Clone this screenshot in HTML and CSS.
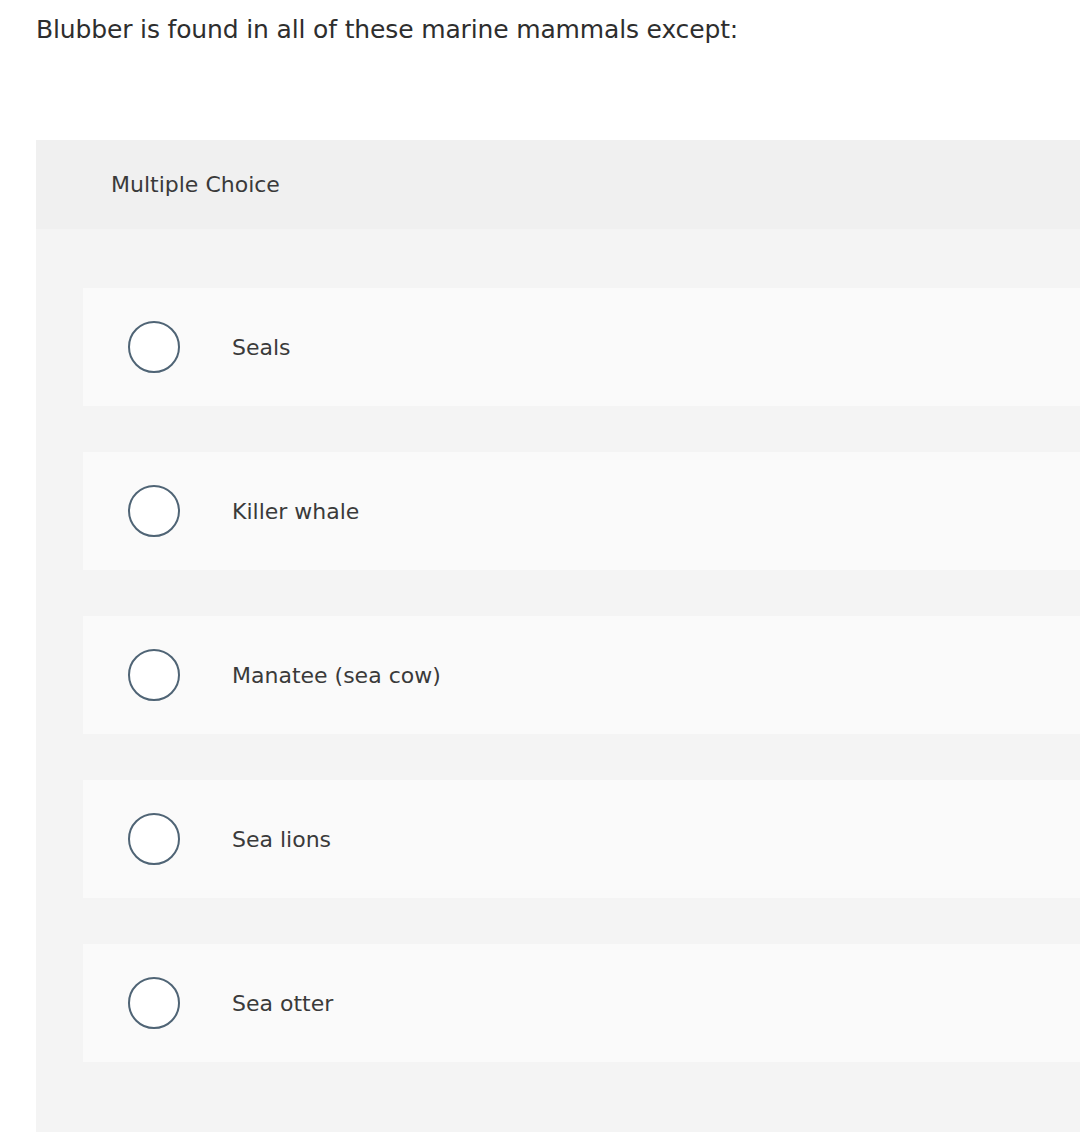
FILE: index.html
```html
<!DOCTYPE html>
<html>
<head>
<meta charset="utf-8">
<link rel="stylesheet" href="styles.css">
</head>
<body>
<div class="question">Blubber is found in all of these marine mammals except:</div>
<div class="panel">
  <div class="panel-head">Multiple Choice</div>
  <div class="options">
    <div class="option"><span class="radio"></span><span class="label">Seals</span></div>
    <div class="option"><span class="radio"></span><span class="label">Killer whale</span></div>
    <div class="option"><span class="radio"></span><span class="label">Manatee (sea cow)</span></div>
    <div class="option"><span class="radio"></span><span class="label">Sea lions</span></div>
    <div class="option"><span class="radio"></span><span class="label">Sea otter</span></div>
  </div>
</div>
</body>
</html>
```
FILE: styles.css
```css
html, body {
  margin: 0;
  padding: 0;
  background: #ffffff;
  overflow: hidden;
}
body {
  font-family: "DejaVu Sans", sans-serif;
  color: #333333;
  width: 1080px;
  height: 1132px;
}
.question {
  padding: 15px 0 0 36px;
  height: 140px;
  box-sizing: border-box;
  font-size: 25px;
  line-height: 30px;
  color: #2e2e2e;
  letter-spacing: -0.15px;
}
.panel {
  margin-left: 36px;
  background: #f4f4f4;
  height: 992px;
}
.panel-head {
  height: 89px;
  background: #f0f0f0;
  display: flex;
  align-items: center;
  padding-left: 75px;
  font-size: 22px;
  color: #3a3a3a;
}
.options {
  padding: 59px 0 0 47px;
  display: flex;
  flex-direction: column;
  gap: 46px;
}
.option {
  height: 118px;
  background: #fafafa;
  display: flex;
  align-items: center;
  padding-left: 45px;
}
.radio {
  width: 48px;
  height: 48px;
  border: 2px solid #4f6475;
  border-radius: 50%;
  background: #ffffff;
  flex: none;
}
.label {
  margin-left: 52px;
  font-size: 22px;
  color: #3a3a3a;
}
```
